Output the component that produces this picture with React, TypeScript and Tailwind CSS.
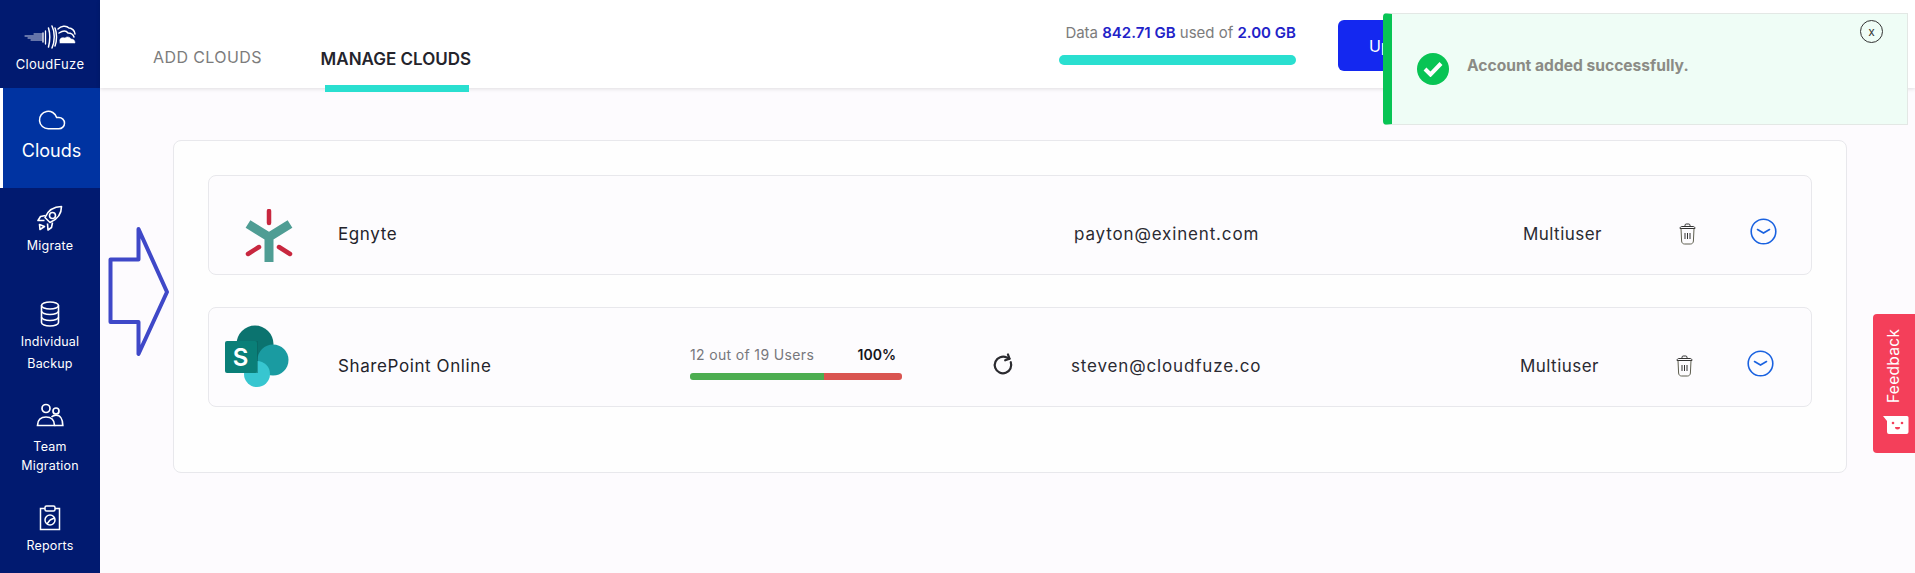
import React from 'react';
import { Cloud, RotateCw } from 'lucide-react';

const font = { fontFamily: 'Inter, "Noto Sans", sans-serif' };

const LogoMark = () => (
  <svg width="52" height="24" viewBox="0 0 52 24" fill="none" stroke="white" strokeLinecap="round">
    <path d="M1 11h17M4 13h14M7 15h11M10 9h8" strokeWidth="0.8" />
    <path d="M19 8v9M21.500 6v13" strokeWidth="1.300" />
    <path d="M24.500 3c1.500 5 1.500 13 0 19M28 1c3 6 3 15 0 22M31 3c2 5 2 13 0 18" strokeWidth="1.500" />
    <path d="M34 4c3-3 8-4 11-1 3 0 6 3 6 6" strokeWidth="1.500" />
    <path d="M35 8c3-2 7-3 9 0 3 0 5 1 6 4" strokeWidth="1.500" />
    <path d="M36 17c-1-4 2-5 5-4 2-2 5-1 6 1 3 0 4 2 4 4H36z" fill="white" strokeWidth="0.5" />
  </svg>
);

const RocketIcon = () => (
  <svg width="26" height="26" viewBox="0 0 26 26" fill="none" stroke="white" strokeWidth="1.600" strokeLinejoin="round">
    <path d="M24.500 1.500C17 1.500 11 5.500 8 12.500l5 5c7-3 11.500-9 11.500-16z" />
    <circle cx="15.500" cy="10.500" r="3" />
    <path d="M8.500 10.500L3.500 11.500 1 15.500h6.500M15.500 17.500l-1 5-3.500 2.500-.5-6.500" />
    <path d="M2.500 19.500l5 2-4.500 3z" />
  </svg>
);

const DatabaseIcon = () => (
  <svg width="20" height="26" viewBox="0 0 20 26" fill="none" stroke="white" strokeWidth="1.600">
    <ellipse cx="10" cy="4.500" rx="8.500" ry="3.500" />
    <path d="M1.500 4.500v17c0 2 3.800 3.500 8.500 3.500s8.500-1.500 8.500-3.500v-17" />
    <path d="M1.500 10c0 2 3.800 3.500 8.500 3.500s8.500-1.500 8.500-3.500M1.500 16c0 2 3.800 3.500 8.500 3.500s8.500-1.500 8.500-3.500" />
  </svg>
);

const TeamIcon = () => (
  <svg width="28" height="24" viewBox="0 0 28 24" fill="none" stroke="white" strokeWidth="1.700">
    <circle cx="10" cy="5.500" r="4" />
    <circle cx="20" cy="8" r="3" />
    <path d="M1.500 22.500c0-5.500 3.500-8.500 8.500-8.500s8.500 3 8.500 8.500z" />
    <path d="M15.500 14c1.300-1.200 3-1.800 4.500-1.800 4 0 6.800 3.800 6.800 10.300h-8.300" />
  </svg>
);

const ReportIcon = () => (
  <svg width="22" height="26" viewBox="0 0 22 26" fill="none" stroke="white" strokeWidth="1.500">
    <path d="M6 3.500H1.500v21h19v-21H16" />
    <rect x="6" y="1" width="10" height="5" rx="1.500" />
    <circle cx="11" cy="15" r="5" />
    <path d="M11 15l4.500-2M11 15l-3 4" />
  </svg>
);

const TrashIcon = () => (
  <svg width="17" height="22" viewBox="0 0 17 22" fill="none" stroke="#333" strokeWidth="1">
    <path d="M1 5.500c0-1.500 1-2 2-2h11c1 0 2 .5 2 2z" />
    <path d="M6 3.500V2.200c0-.7.5-1.200 1.200-1.200h2.600c.7 0 1.200.5 1.200 1.200v1.300" />
    <path d="M2 5.500l.6 12.500c.1 2 1.400 3 3 3h5.800c1.600 0 2.900-1 3-3l.6-12.500" stroke="#5f5f50" />
    <path d="M6 10v6M8.500 10v6M11 10v6" />
  </svg>
);

const ChevronCircle = () => (
  <svg width="27" height="27" viewBox="0 0 27 27" fill="none" stroke="#1a62e0" strokeWidth="1.600">
    <circle cx="13.500" cy="13.500" r="12.300" />
    <path d="M7.500 11.500l6 3.500 6-3.500" strokeLinecap="round" />
  </svg>
);

const EgnyteLogo = () => (
  <svg width="48" height="54" viewBox="0 0 48 54" fill="none">
    <path d="M3 15l21 13 21-13M24 27v26" stroke="#4f9d94" strokeWidth="9" />
    <path d="M24 2v12M3 45l11-7M45 45l-11-7" stroke="#c8273f" strokeWidth="4.500" strokeLinecap="round" />
  </svg>
);

const SharePointLogo = () => (
  <svg width="64" height="63" viewBox="0 0 64 63">
    <circle cx="30" cy="19" r="18.500" fill="#0b736f" />
    <circle cx="48" cy="35" r="15.500" fill="#1a9ba1" />
    <circle cx="32" cy="49" r="13" fill="#37c6d0" />
    <path d="M19 16h14v32H19z" fill="#0a5f5c" opacity="0.5" />
    <rect x="0" y="16" width="32" height="32" rx="2" fill="#0a7f78" />
    <text x="15.500" y="41" fontSize="24" fontWeight="600" fill="white" textAnchor="middle" fontFamily="Inter, sans-serif">S</text>
  </svg>
);

const FeedbackFace = () => (
  <svg width="26" height="20" viewBox="0 0 26 20">
    <path d="M0 1h24a1.500 1.500 0 0 1 1.500 1.500V17a2 2 0 0 1-2 2H6a2 2 0 0 1-2-2V6z" fill="white" />
    <circle cx="10" cy="8" r="1.300" fill="#f43f5a" />
    <circle cx="19" cy="8" r="1.300" fill="#f43f5a" />
    <path d="M12 12h5a2.500 2.500 0 0 1-5 0z" fill="#f43f5a" />
  </svg>
);

const Sidebar = () => (
  <aside className="flex w-[100px] shrink-0 flex-col bg-[#011a70] text-white">
    <div className="flex h-[88px] flex-col items-center pt-[25px]">
      <LogoMark />
      <span className="mt-[6px] text-[13px] leading-[18px] tracking-[0.35px]">CloudFuze</span>
    </div>
    <div className="flex h-[100px] flex-col items-center border-l-[3px] border-white bg-[#0033a1] pt-[17px]">
      <Cloud size={30} strokeWidth={1.2} />
      <span className="mt-[4px] text-[18px] leading-[24px]">Clouds</span>
    </div>
    <div className="flex flex-col items-center pt-[17px]">
      <RocketIcon />
      <span className="mt-[6px] text-[12.500px] leading-[18px] tracking-[0.2px]">Migrate</span>
    </div>
    <div className="mt-[46px] flex flex-col items-center">
      <DatabaseIcon />
      <span className="mt-[4px] text-center text-[12.500px] leading-[22px] tracking-[0.2px]">Individual<br />Backup</span>
    </div>
    <div className="mt-[28px] flex flex-col items-center">
      <TeamIcon />
      <span className="mt-[10px] text-center text-[12.500px] leading-[19px] tracking-[0.2px]">Team<br />Migration</span>
    </div>
    <div className="mt-[30px] flex flex-col items-center">
      <ReportIcon />
      <span className="mt-[6px] text-[12.500px] leading-[18px] tracking-[0.2px]">Reports</span>
    </div>
  </aside>
);

const Header = () => (
  <header className="relative flex h-[88px] shrink-0 bg-white pl-[53px] shadow-[0_1px_4px_rgba(0,0,0,0.12)]">
    <span className="mt-[46px] text-[16px] leading-[22px] tracking-[0.4px] text-[#7c7c7c]">ADD CLOUDS</span>
    <div className="ml-[58px] flex w-[152px] flex-col items-center self-stretch">
      <span className="mt-[47px] whitespace-nowrap text-[17px] font-semibold leading-[24px] text-[#24242c]">MANAGE CLOUDS</span>
      <div className="ml-[2px] translate-y-[14px] h-[7px] w-[144px] bg-[#2adfd0]" />
    </div>
    <div className="ml-[587px] flex w-[237px] flex-col items-end pt-[23px]">
      <span className="whitespace-nowrap text-[15px] leading-[20px] text-[#7c7c7c]">
        Data <b className="font-semibold text-[#2222c8]">842.71 GB</b> used of <b className="font-semibold text-[#2222c8]">2.00 GB</b>
      </span>
      <div className="mt-[12px] h-[10px] w-full rounded-full bg-[#2adfd0]" />
    </div>
    <div className="ml-[42px] mt-[20px] flex h-[51px] w-[150px] items-center rounded-md bg-[#1428f0] pl-[31px] text-[16px] text-white">Upgrade</div>
  </header>
);

type RowProps = {
  logo: React.ReactNode;
  name: string;
  email: string;
  cols: string;
  progress?: boolean;
};

const CloudRow = ({ logo, name, email, cols, progress }: RowProps) => (
  <div className={`grid h-[100px] items-center rounded-lg border border-[#e8e8ec] bg-[#fdfcfe] pt-[18px] ${cols}`}>
    <div>{logo}</div>
    <span className="text-[17px] leading-[24px] tracking-[0.6px] text-[#23232b]">{name}</span>
    <div className="flex items-center">
      {progress && (
        <>
          <div className="w-[212px] -translate-y-[4px]">
            <div className="flex justify-between pr-[6px] text-[14px] leading-[20px]">
              <span className="tracking-[0.35px] text-[#77777c]">12 out of 19 Users</span>
              <b className="font-semibold text-[#15151a]">100%</b>
            </div>
            <div className="mt-[8px] flex h-[7px] overflow-hidden rounded-[3px]">
              <div className="w-[134px] bg-[#4cad50]" />
              <div className="flex-1 bg-[#d95450]" />
            </div>
          </div>
          <RotateCw size={22} strokeWidth={2.400} className="ml-[90px] rotate-[-20deg] -translate-y-px text-[#2b2b30]" />
        </>
      )}
    </div>
    <span className="text-[17px] leading-[24px] tracking-[0.85px] text-[#2a2a32]">{email}</span>
    <span className="text-[17px] leading-[24px] tracking-[0.45px] text-[#2a2a32]">Multiuser</span>
    <div className="flex items-center -ml-px"><TrashIcon /></div>
    <div className="flex items-center -translate-y-[3px]"><ChevronCircle /></div>
  </div>
);

const Toast = () => (
  <div className="absolute left-[1383px] top-[13px] flex h-[112px] w-[525px] items-center rounded-l-[4px] border border-[#e3e8e5] border-l-[9px] border-l-[#08c454] bg-[#effdf6] pl-[25px]">
    <div className="flex h-[32px] w-[32px] items-center justify-center rounded-full bg-[#08c454]">
      <svg width="20" height="16" viewBox="0 0 20 16" fill="none" stroke="white" strokeWidth="4"><path d="M2 8l5.500 5.500L18 2.500" /></svg>
    </div>
    <span className="ml-[18px] -translate-y-[3px] text-[15.600px] font-bold leading-[20px] text-[#8b8b85]">Account added successfully.</span>
    <div className="absolute right-[24px] top-[6px] flex h-[23px] w-[23px] items-center justify-center rounded-full border border-[#333] text-[12px] leading-none text-[#333]">x</div>
  </div>
);

const Arrow = () => (
  <svg className="absolute left-[105px] top-[224px]" width="66" height="134" viewBox="0 0 66 134" fill="none">
    <path d="M5.500 35.500H33.500V5L62 68 33.500 130V98H5.500z" stroke="#3f48c8" strokeWidth="4" strokeLinejoin="round" />
  </svg>
);

const Feedback = () => (
  <div className="absolute left-[1873px] top-[314px] flex h-[139px] w-[42px] flex-col items-center rounded-l-[4px] bg-[#f43f5a] text-white">
    <span className="mt-[15px] h-[74px] text-[15.500px] leading-[20px] tracking-[0.3px] [writing-mode:vertical-rl] rotate-180">Feedback</span>
    <div className="mt-[12px] ml-[3px]"><FeedbackFace /></div>
  </div>
);

export default function App() {
  return (
    <div className="relative flex h-[573px] w-[1915px] overflow-hidden bg-[#fdfbfe]" style={font}>
      <Sidebar />
      <main className="flex flex-1 flex-col">
        <Header />
        <div className="pl-[73px] pt-[52px]">
          <section className="flex h-[333px] w-[1674px] flex-col gap-[32px] rounded-lg border border-[#e8e8ec] bg-[#fefefe] px-[34px] pt-[34px]">
            <CloudRow
              logo={<div className="ml-[36px] translate-y-[2px]"><EgnyteLogo /></div>}
              name="Egnyte"
              email="payton@exinent.com"
              cols="grid-cols-[129px_352px_384px_449px_157px_70px_1fr]"
            />
            <CloudRow
              logo={<div className="ml-[16px] -translate-y-[10px]"><SharePointLogo /></div>}
              name="SharePoint Online"
              email="steven@cloudfuze.co"
              cols="grid-cols-[129px_352px_381px_449px_157px_70px_1fr]"
              progress
            />
          </section>
        </div>
      </main>
      <Arrow />
      <Toast />
      <Feedback />
    </div>
  );
}
